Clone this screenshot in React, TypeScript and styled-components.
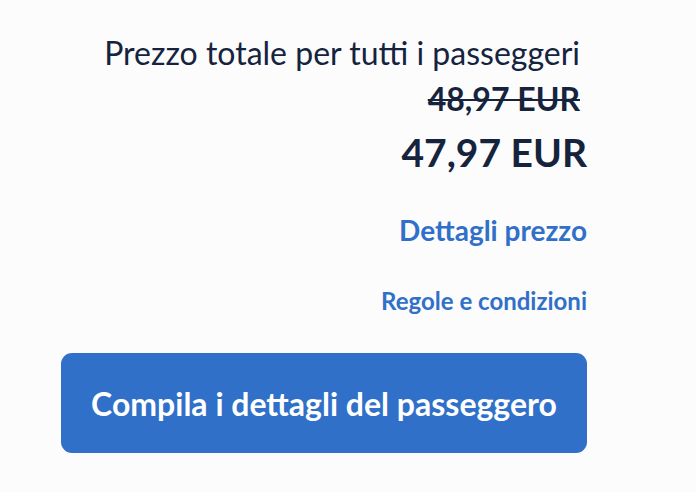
import React from 'react';
import styled, { createGlobalStyle } from 'styled-components';

const GlobalStyle = createGlobalStyle`
  html, body {
    margin: 0;
    padding: 0;
    background-color: #fcfcfd;
  }

  body {
    font-family: Lato, 'Liberation Sans', sans-serif;
    color: #15233d;
  }
`;

const Page = styled.div`
  width: 696px;
  height: 492px;
  box-sizing: border-box;
  padding: 33px 109px 0 61px;
  display: flex;
  flex-direction: column;
  align-items: flex-end;
`;

const Summary = styled.div`
  display: flex;
  flex-direction: column;
  align-items: flex-end;
  padding-right: 7px;
`;

const Label = styled.div`
  font-size: 32px;
  line-height: 40px;
  font-weight: 400;
`;

const OldPrice = styled.div`
  margin-top: 2px;
  font-size: 32px;
  line-height: 48px;
  font-weight: 700;
  text-decoration: line-through;
  text-decoration-thickness: 2px;
`;

const Price = styled.div`
  margin-top: 6px;
  font-size: 39px;
  line-height: 46px;
  font-weight: 700;
`;

interface LinkTextProps {
  readonly size: number;
}

const LinkText = styled.a<LinkTextProps>`
  display: block;
  font-size: ${(props) => props.size}px;
  line-height: ${(props) => props.size + 6}px;
  font-weight: 700;
  color: #3070c8;
  text-decoration: none;
  cursor: pointer;
`;

const Links = styled.div`
  margin-top: 38px;
  display: flex;
  flex-direction: column;
  align-items: flex-end;
  gap: 39px;
`;

const SubmitButton = styled.button`
  margin-top: 37px;
  width: 100%;
  height: 100px;
  border: none;
  border-radius: 11px;
  background-color: #3070c8;
  color: #fff;
  font-family: Lato, 'Liberation Sans', sans-serif;
  font-size: 32px;
  font-weight: 700;
  cursor: pointer;
`;

export default function App(): JSX.Element {
  return (
    <>
      <GlobalStyle />
      <Page>
        <Summary>
          <Label>Prezzo totale per tutti i passeggeri</Label>
          <OldPrice>48,97 EUR</OldPrice>
        </Summary>
        <Price>47,97 EUR</Price>
        <Links>
          <LinkText size={28}>Dettagli prezzo</LinkText>
          <LinkText size={24}>Regole e condizioni</LinkText>
        </Links>
        <SubmitButton>Compila i dettagli del passeggero</SubmitButton>
      </Page>
    </>
  );
}
